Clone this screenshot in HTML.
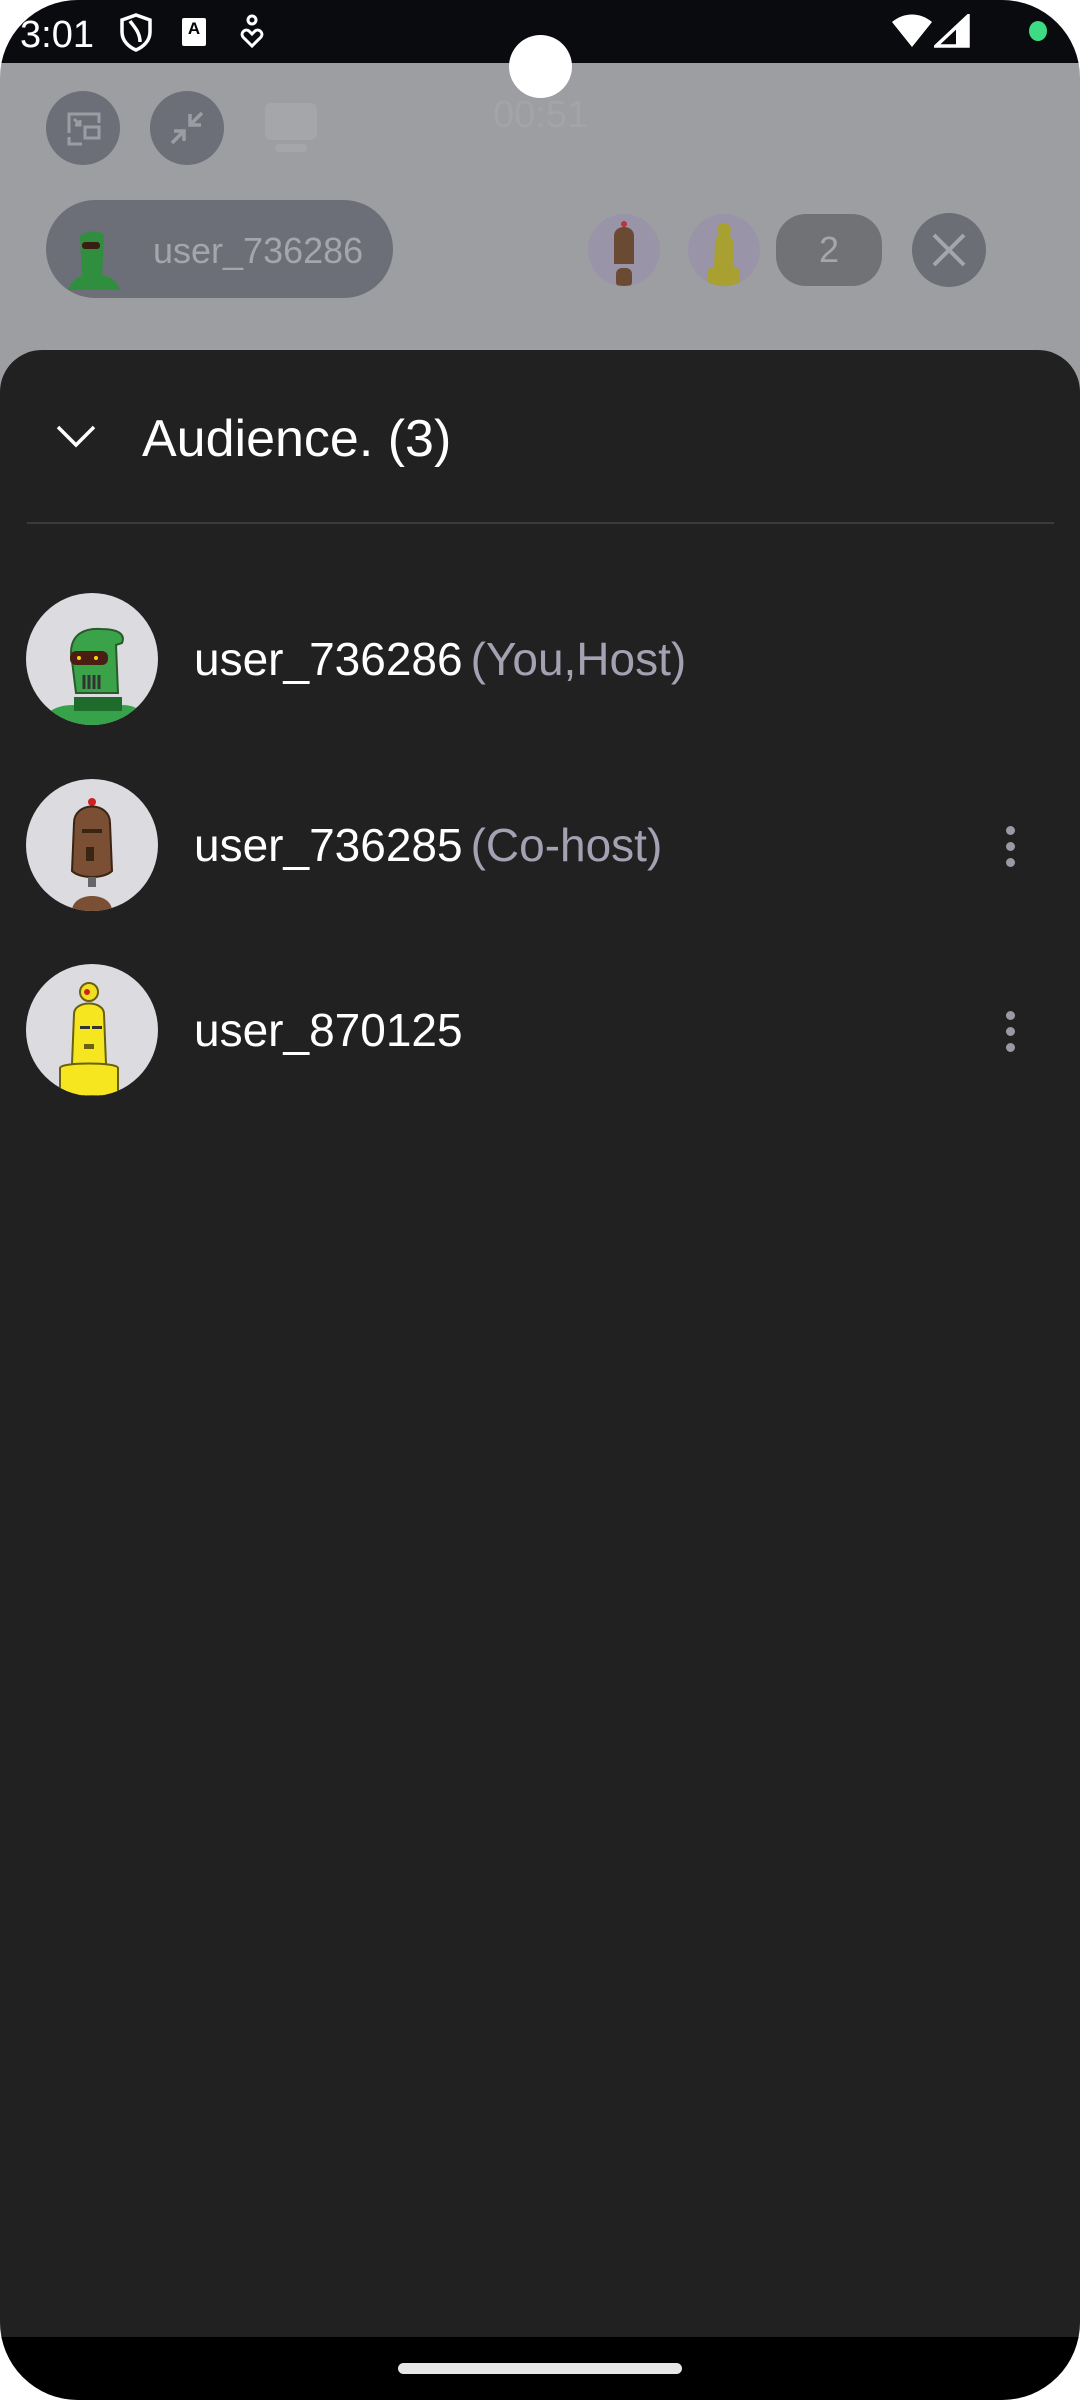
<!DOCTYPE html>
<html><head><meta charset="utf-8"><style>
*{margin:0;padding:0;box-sizing:border-box}
html,body{width:1080px;height:2400px;background:#fff;overflow:hidden;font-family:"Liberation Sans",sans-serif}
#scr{position:absolute;left:0;top:0;width:1080px;height:2400px;border-radius:78px;overflow:hidden;background:#9d9ea2}
.abs{position:absolute}
.sb{left:0;top:0;width:1080px;height:63px;background:#0a0b0f}
.circ{border-radius:50%}
.sheet{left:0;top:350px;width:1080px;height:1990px;background:#212121;border-radius:42px 42px 0 0}
.nav{left:0;top:2337px;width:1080px;height:63px;background:#000}
.name{position:absolute;left:194px;font-size:46px;color:#fff;white-space:nowrap;line-height:1}
.name span{color:#a3a2b3;margin-left:8px}
.dots{position:absolute;left:1003px;width:14px}
.dots i{display:block;width:9px;height:9px;border-radius:50%;background:#9a9aa6;margin:0 auto 7px}
</style></head><body>
<div id="scr">
<div class="abs sb"></div>
<div class="abs" style="left:20px;top:14px;font-size:38px;color:#fff">3:01</div>
<svg class="abs" style="left:118px;top:12px" width="36" height="40" viewBox="0 0 36 40"><path d="M18 3 L32 8 V20 C32 29 25 35 18 38 C11 35 4 29 4 20 V8 Z" fill="none" stroke="#fff" stroke-width="3.5"/><path d="M12 9 C16 15 22 20 22 30" fill="none" stroke="#fff" stroke-width="3.5"/></svg>
<div class="abs" style="left:182px;top:18px;width:24px;height:28px;background:#fff;border-radius:2px;font-size:17px;font-weight:bold;text-align:center;color:#000;line-height:22px">A</div>
<svg class="abs" style="left:240px;top:14px" width="24" height="36" viewBox="0 0 24 36"><circle cx="12" cy="6" r="4" fill="none" stroke="#fff" stroke-width="3"/><path d="M12 32 L3 23 C0 19 5 14 9 17 L12 20 L15 17 C19 14 24 19 21 23 Z" fill="none" stroke="#fff" stroke-width="3"/></svg>
<svg class="abs" style="left:892px;top:14px" width="40" height="34" viewBox="0 0 40 34"><path d="M0 8 C12 -2 28 -2 40 8 L20 33 Z" fill="#fff"/></svg>
<svg class="abs" style="left:934px;top:14px" width="36" height="34" viewBox="0 0 36 34"><path d="M34 2 V32 H2 Z" fill="none" stroke="#fff" stroke-width="3.5"/><path d="M22 14 V32 H34 V2 Z" fill="#fff"/></svg>
<div class="abs circ" style="left:1029px;top:21px;width:18px;height:20px;background:#3ddc84"></div>
<div class="abs circ" style="left:509px;top:35px;width:63px;height:63px;background:#fff"></div>

<div class="abs circ" style="left:46px;top:91px;width:74px;height:74px;background:#6c6e78"></div>
<svg class="abs" style="left:66px;top:111px" width="36" height="36" viewBox="0 0 36 36"><path d="M3 22 V3 H33 V12 M16 33 H3 V26" fill="none" stroke="#9b9ca4" stroke-width="3"/><rect x="19" y="16" width="14" height="11" fill="none" stroke="#9b9ca4" stroke-width="3"/><path d="M8 8 L14 14 M14 9 V14 H9" fill="none" stroke="#9b9ca4" stroke-width="3"/></svg>
<div class="abs circ" style="left:150px;top:91px;width:74px;height:74px;background:#6c6e78"></div>
<svg class="abs" style="left:168px;top:109px" width="38" height="38" viewBox="0 0 38 38"><path d="M34 4 L23 15 M22 5 V16 H33 M4 34 L15 23 M6 22 H16 V32" fill="none" stroke="#9b9ca4" stroke-width="3.5"/></svg>
<div class="abs" style="left:265px;top:103px;width:52px;height:37px;background:#a5a6aa;border-radius:6px"></div>
<div class="abs" style="left:275px;top:144px;width:32px;height:8px;background:#a5a6aa;border-radius:4px"></div>
<div class="abs" style="left:493px;top:94px;font-size:38px;color:#a3a4a8">00:51</div>

<div class="abs" style="left:46px;top:200px;width:347px;height:98px;background:#6c6f78;border-radius:49px"></div>
<svg class="abs" style="left:62px;top:228px" width="66" height="66" viewBox="0 0 66 66"><path d="M18 8 C24 2 40 2 42 8 L40 48 H20 Z" fill="#2f8f3f"/><rect x="20" y="14" width="18" height="7" rx="3" fill="#3a1e12"/><path d="M6 62 C10 50 20 46 32 46 C44 46 54 50 58 62 Z" fill="#2f8f3f"/></svg>
<div class="abs" style="left:153px;top:230px;font-size:36px;color:#a5a6ac">user_736286</div>

<div class="abs circ" style="left:588px;top:214px;width:72px;height:72px;background:#9a94a8;overflow:hidden"><svg width="72" height="72" viewBox="0 0 72 72"><circle cx="36" cy="10" r="3" fill="#b33"/><path d="M26 22 C26 10 46 10 46 22 L46 50 H26 Z" fill="#6b4a33"/><rect x="28" y="54" width="16" height="20" rx="6" fill="#6b4a33"/></svg></div>
<div class="abs circ" style="left:688px;top:214px;width:72px;height:72px;background:#9a94a8;overflow:hidden"><svg width="72" height="72" viewBox="0 0 72 72"><circle cx="36" cy="16" r="7" fill="#a8a030"/><path d="M27 28 C27 18 45 18 45 28 L46 56 H26 Z" fill="#a8a030"/><rect x="20" y="54" width="32" height="20" rx="4" fill="#a8a030"/></svg></div>
<div class="abs" style="left:776px;top:214px;width:106px;height:72px;background:#717276;border-radius:30px;color:#a5a6aa;font-size:36px;text-align:center;line-height:72px">2</div>
<div class="abs circ" style="left:912px;top:213px;width:74px;height:74px;background:#6c6e76"></div>
<svg class="abs" style="left:929px;top:230px" width="40" height="40" viewBox="0 0 40 40"><path d="M5 5 L35 35 M35 5 L5 35" stroke="#a5a6ac" stroke-width="4"/></svg>

<div class="abs sheet"></div>
<svg class="abs" style="left:56px;top:424px" width="40" height="26" viewBox="0 0 40 26"><path d="M2 3 L20 21 L38 3" fill="none" stroke="#fff" stroke-width="3.5"/></svg>
<div class="abs" style="left:142px;top:411px;font-size:52px;color:#fff;line-height:1.1">Audience. (3)</div>
<div class="abs" style="left:27px;top:522px;width:1027px;height:2px;background:#3a3a3a"></div>

<div class="abs circ" style="left:26px;top:593px;width:132px;height:132px;background:#dcdce0;overflow:hidden"><svg width="132" height="132" viewBox="0 0 132 132"><path d="M45 60 C45 40 60 35 75 36 C90 36 100 40 96 50 L90 52 L92 100 H50 Z" fill="#3aa34a" stroke="#2a5a2a" stroke-width="2"/><rect x="44" y="58" width="38" height="14" rx="6" fill="#4a1e12"/><circle cx="53" cy="65" r="2" fill="#ffd400"/><circle cx="70" cy="65" r="2" fill="#ffd400"/><path d="M58 82 V96 M63 82 V96 M68 82 V96 M73 82 V96" stroke="#333" stroke-width="3"/><path d="M14 132 C20 118 30 112 48 112 V104 H96 V112 C110 112 118 118 122 132 Z" fill="#36a24a"/><rect x="48" y="104" width="48" height="14" fill="#1f6b2c"/></svg></div>
<div class="name" style="top:636px">user_736286<span>(You,Host)</span></div>

<div class="abs circ" style="left:26px;top:779px;width:132px;height:132px;background:#dcdce0;overflow:hidden"><svg width="132" height="132" viewBox="0 0 132 132"><circle cx="66" cy="23" r="4" fill="#d02020"/><path d="M48 44 C48 22 84 22 84 44 L86 92 C78 100 54 100 46 92 Z" fill="#7a4f33" stroke="#3a2414" stroke-width="2"/><rect x="56" y="50" width="20" height="4" fill="#3a2414"/><rect x="60" y="68" width="8" height="14" fill="#3a2414"/><rect x="62" y="98" width="8" height="10" fill="#666"/><path d="M46 132 C46 112 86 112 86 132 Z" fill="#7a4f33"/></svg></div>
<div class="name" style="top:822px">user_736285<span>(Co-host)</span></div>
<div class="dots" style="top:826px"><i></i><i></i><i></i></div>

<div class="abs circ" style="left:26px;top:964px;width:132px;height:132px;background:#dcdce0;overflow:hidden"><svg width="132" height="132" viewBox="0 0 132 132"><circle cx="63" cy="28" r="9" fill="#f0e020" stroke="#6a6010" stroke-width="2"/><circle cx="61" cy="28" r="3" fill="#d02020"/><path d="M48 50 C48 36 78 36 78 50 L80 100 H46 Z" fill="#f5e61f" stroke="#6a6010" stroke-width="2"/><rect x="54" y="62" width="10" height="3" fill="#333"/><rect x="66" y="62" width="10" height="3" fill="#333"/><rect x="58" y="80" width="10" height="5" fill="#6a6010"/><path d="M34 132 V104 C34 98 92 98 92 104 V132 Z" fill="#f5e61f" stroke="#6a6010" stroke-width="2"/></svg></div>
<div class="name" style="top:1007px">user_870125</div>
<div class="dots" style="top:1011px"><i></i><i></i><i></i></div>

<div class="abs nav"></div>
<div class="abs" style="left:398px;top:2363px;width:284px;height:11px;background:#e6e6e6;border-radius:6px"></div>
</div>
</body></html>
